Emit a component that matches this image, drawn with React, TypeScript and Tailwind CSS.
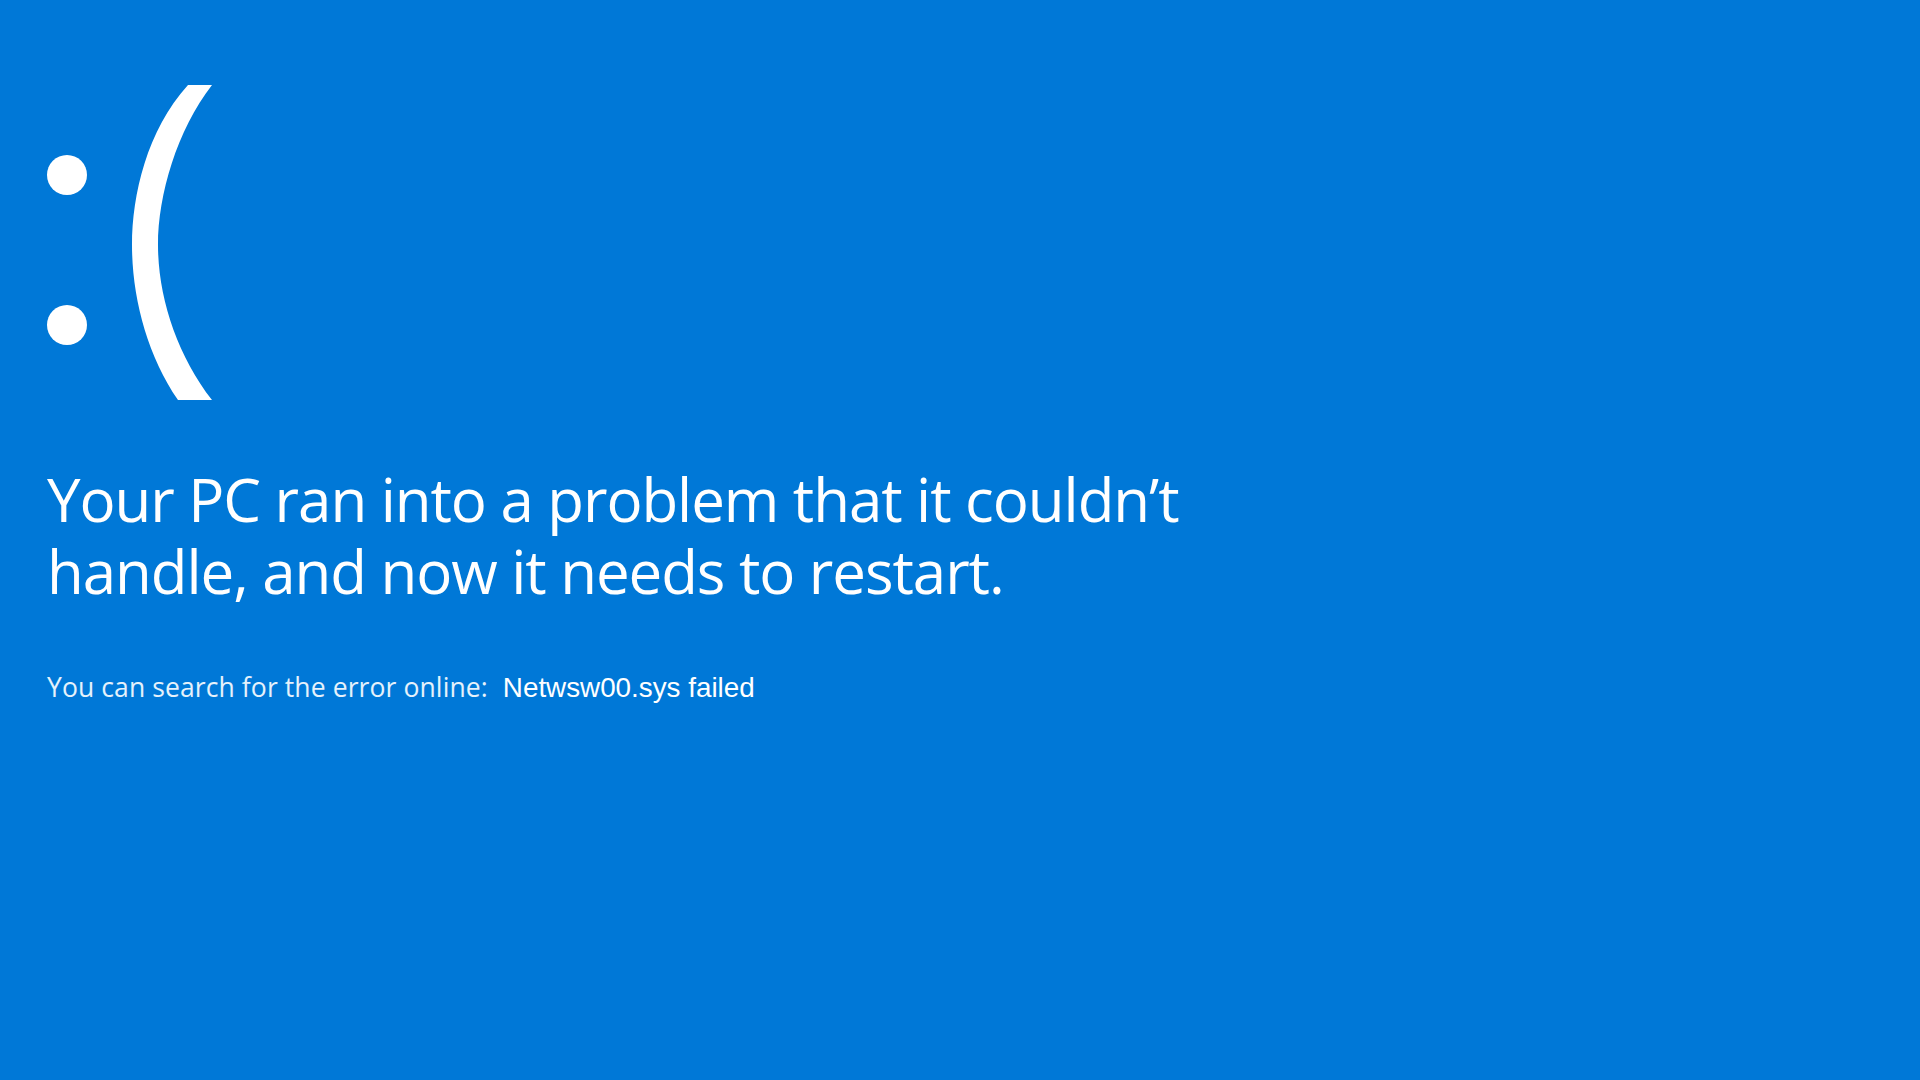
import React from "react";

export default function App() {
  return (
    <div className="w-[1920px] h-[1080px] bg-[#0078d7] overflow-hidden text-white">
      <div className="pl-[47px] pt-[85px] flex flex-col">
        <svg width="170" height="316" viewBox="0 0 170 316" className="block">
          <circle cx="20" cy="90" r="20" fill="white" />
          <circle cx="20" cy="240" r="20" fill="white" />
          <path
            d="M141,0 C100,45 85,110 85,160 C85,212 100,270 131,315 L165,315 C130,270 111,212 111,160 C111,110 130,45 165,0 Z"
            fill="white"
          />
        </svg>
        <h1
          className="mt-[62px] text-[60px] leading-[72px] font-normal tracking-[-1.05px] w-[1200px]"
          style={{ fontFamily: '"Open Sans", "Noto Sans", sans-serif' }}
        >
          Your PC ran into a problem that it couldn’t
          <br />
          handle, and now it needs to restart.
        </h1>
        <div className="mt-[60px] flex items-baseline">
          <span
            className="text-[26.5px] text-white/90 tracking-[0.1px]"
            style={{ fontFamily: '"Open Sans", "Noto Sans", sans-serif' }}
          >
            You can search for the error online:
          </span>
          <span
            className="ml-[15px] text-[27.8px]"
            style={{ fontFamily: '"Liberation Sans", Arial, sans-serif' }}
          >
            Netwsw00.sys failed
          </span>
        </div>
      </div>
    </div>
  );
}
